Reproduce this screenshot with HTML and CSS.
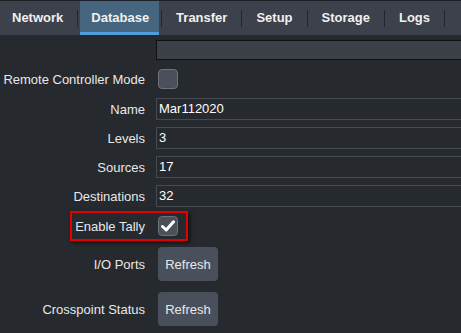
FILE: index.html
```html
<!DOCTYPE html>
<html lang="en">
<head>
    <meta charset="UTF-8">
    <meta name="viewport" content="width=device-width, initial-scale=1.0">
    <title>Database</title>
    <link rel="stylesheet" href="styles.css">
</head>
<body>
    <div class="tabs">
        <div class="tab">Network</div>
        <div class="sep"></div>
        <div class="tab active">Database</div>
        <div class="sep"></div>
        <div class="tab">Transfer</div>
        <div class="sep"></div>
        <div class="tab">Setup</div>
        <div class="sep"></div>
        <div class="tab">Storage</div>
        <div class="sep"></div>
        <div class="tab">Logs</div>
        <div class="sep"></div>
    </div>
    <div class="form">
        <div class="row row-top">
            <div class="label"></div>
            <div class="field top-field"></div>
        </div>
        <div class="row row-remote">
            <div class="label">Remote Controller Mode</div>
            <div class="check"></div>
        </div>
        <div class="row row-input">
            <div class="label">Name</div>
            <div class="field">Mar112020</div>
        </div>
        <div class="row row-input">
            <div class="label">Levels</div>
            <div class="field">3</div>
        </div>
        <div class="row row-input">
            <div class="label">Sources</div>
            <div class="field">17</div>
        </div>
        <div class="row row-input">
            <div class="label">Destinations</div>
            <div class="field">32</div>
        </div>
        <div class="row row-tally">
            <div class="label">Enable Tally</div>
            <div class="check checked">
                <svg width="14" height="12" viewBox="0 0 14 12"><path d="M1.5 6.5 L5.2 10 L12.5 1.8" fill="none" stroke="#fff" stroke-width="3" stroke-linecap="round" stroke-linejoin="round"/></svg>
            </div>
            <div class="highlight"></div>
        </div>
        <div class="row row-button">
            <div class="label">I/O Ports</div>
            <button class="btn">Refresh</button>
        </div>
        <div class="row row-button">
            <div class="label">Crosspoint Status</div>
            <button class="btn">Refresh</button>
        </div>
    </div>
</body>
</html>
```

FILE: styles.css
```css
body {
    margin: 0;
    background-color: #26292e;
    font-family: "Liberation Sans", Arial, sans-serif;
    font-size: 13px;
    color: #e8e8e8;
    overflow: hidden;
}
.tabs {
    display: flex;
    align-items: stretch;
    height: 34px;
    background-color: #3c414b;
    border-top: 1px solid #1e2125;
}
.tab {
    padding: 0 12px 0 12px;
    line-height: 34px;
    font-weight: bold;
    color: #f0f0f0;
    box-sizing: border-box;
}
.tab.active {
    background-color: #46667f;
    border-bottom: 3px solid #4d9fdc;
    padding: 0 10px 0 11px;
    height: 34px;
}
.sep {
    width: 1px;
    margin: 9px 2px 8px 2px;
    background-color: #23262b;
}
.form {
    display: flex;
    flex-direction: column;
}
.row {
    display: flex;
    align-items: center;
    position: relative;
    box-sizing: border-box;
}
.label {
    width: 145px;
    flex-shrink: 0;
    text-align: right;
    margin-right: 11px;
    white-space: nowrap;
}
.row-top {
    margin-top: 5px;
    height: 20px;
}
.row-remote {
    height: 38px;
}
.row-input {
    height: 22px;
    margin-bottom: 7px;
}
.field {
    flex: 1;
    height: 22px;
    box-sizing: border-box;
    border: 1px solid #464a51;
    border-right: none;
    padding-left: 2px;
    line-height: 20px;
    color: #ffffff;
}
.top-field {
    height: 20px;
    background-color: #3b4049;
    border-color: #0f1012;
}
.check {
    width: 20px;
    height: 20px;
    box-sizing: border-box;
    margin-left: 2px;
    background-color: #4a4f5a;
    border: 1px solid #6c717b;
    border-radius: 4px;
    display: flex;
    align-items: center;
    justify-content: center;
}
.row-tally {
    margin-top: -7px;
    margin-bottom: 2px;
    height: 38px;
}
.highlight {
    position: absolute;
    left: 70px;
    top: 4px;
    width: 118px;
    height: 30px;
    box-sizing: border-box;
    border: 2px solid #e50000;
    box-shadow: 2px 2px 4px rgba(0, 0, 0, 0.6);
}
.row-button {
    height: 34px;
    margin-bottom: 11px;
}
.btn {
    margin-left: 2px;
    width: 60px;
    height: 34px;
    background-color: #4a505b;
    border: none;
    border-radius: 4px;
    color: #e8e8e8;
    font-family: "Liberation Sans", Arial, sans-serif;
    font-size: 13px;
    padding: 0;
}
```
